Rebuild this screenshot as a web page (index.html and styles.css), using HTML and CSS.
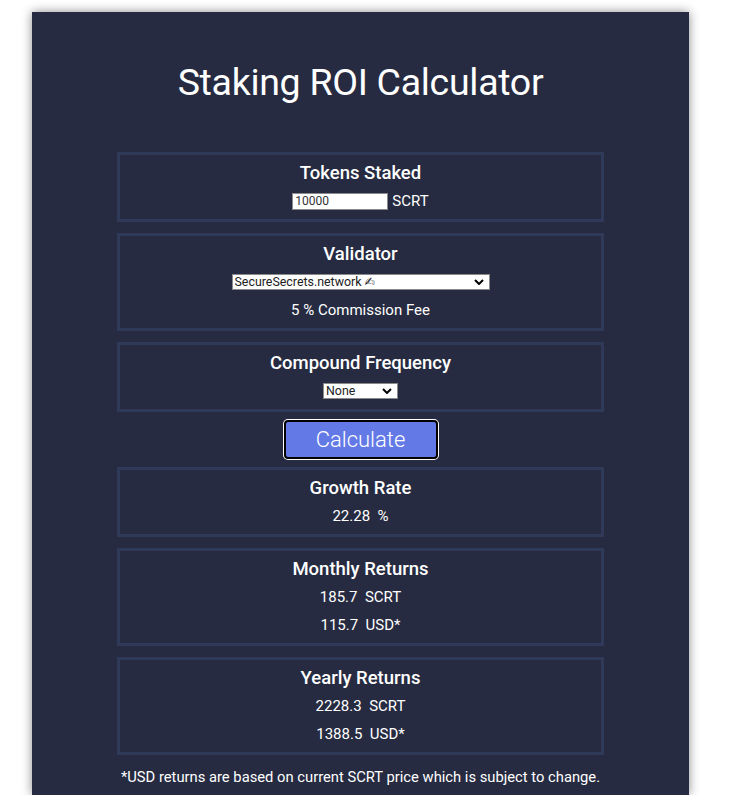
FILE: index.html
```html
<!DOCTYPE html>
<html>
<head>
<meta charset="utf-8">
<title>Staking ROI Calculator</title>
<link rel="stylesheet" href="styles.css">
</head>
<body>
<main class="panel">
  <h1 class="title">Staking ROI Calculator</h1>
  <section class="card">
    <h2 class="card-title">Tokens Staked</h2>
    <div class="row"><input class="num" type="text" value="10000"> SCRT</div>
  </section>
  <section class="card">
    <h2 class="card-title">Validator</h2>
    <div class="row">
      <span class="select-wrap wide">
        <select class="select"><option>SecureSecrets.network ✍</option></select>
        <svg class="chev" viewBox="0 0 10 6" width="10" height="6"><path d="M1 1l4 4 4-4" fill="none" stroke="#000" stroke-width="2"/></svg>
      </span>
    </div>
    <div class="row">5 % Commission Fee</div>
  </section>
  <section class="card">
    <h2 class="card-title">Compound Frequency</h2>
    <div class="row">
      <span class="select-wrap narrow">
        <select class="select"><option>None</option></select>
        <svg class="chev" viewBox="0 0 10 6" width="10" height="6"><path d="M1 1l4 4 4-4" fill="none" stroke="#000" stroke-width="2"/></svg>
      </span>
    </div>
  </section>
  <div class="btn-row"><button class="calc">Calculate</button></div>
  <section class="card">
    <h2 class="card-title">Growth Rate</h2>
    <div class="row">22.28&nbsp; %</div>
  </section>
  <section class="card">
    <h2 class="card-title">Monthly Returns</h2>
    <div class="row">185.7&nbsp; SCRT</div>
    <div class="row">115.7&nbsp; USD*</div>
  </section>
  <section class="card">
    <h2 class="card-title">Yearly Returns</h2>
    <div class="row">2228.3&nbsp; SCRT</div>
    <div class="row">1388.5&nbsp; USD*</div>
  </section>
  <p class="note">*USD returns are based on current SCRT price which is subject to change.</p>
</main>
</body>
</html>
```
FILE: styles.css
```css
html, body {
  margin: 0;
  padding: 0;
  background: #fff;
}
body {
  font-family: Roboto, "Liberation Sans", sans-serif;
  color: #fff;
}
.panel {
  box-sizing: border-box;
  margin: 12px 0 0 32px;
  width: 657px;
  height: 783px;
  background: #262b41;
  box-shadow: 0 0 10px rgba(0, 0, 0, 0.45);
  padding: 47px 85px 0;
  display: flex;
  flex-direction: column;
}
.title {
  margin: 0 0 47px;
  font-size: 37.5px;
  font-weight: 400;
  line-height: 46px;
  text-align: center;
  letter-spacing: -0.3px;
}
.card {
  border: 3px solid #2f3a59;
  padding: 4px 0;
  margin-bottom: 11px;
  text-align: center;
}
.card-title {
  margin: 0;
  font-size: 18.5px;
  font-weight: 500;
  line-height: 28px;
}
.row {
  font-size: 15px;
  line-height: 28px;
  min-height: 28px;
  display: flex;
  justify-content: center;
  align-items: center;
  gap: 4px;
}
.num {
  box-sizing: border-box;
  width: 96px;
  height: 17px;
  border: 1px solid #8a8a8a;
  padding: 0 2px;
  font-family: Roboto, "Liberation Sans", sans-serif;
  font-size: 12px;
  color: #333;
  outline: none;
  margin: 0;
}
.select-wrap {
  position: relative;
  display: inline-block;
  height: 16px;
}
.select-wrap.wide { width: 258px; }
.select-wrap.narrow { width: 75px; }
.select {
  appearance: none;
  -webkit-appearance: none;
  box-sizing: border-box;
  width: 100%;
  height: 16px;
  margin: 0;
  border: 1px solid #8a8a8a;
  border-radius: 0;
  background: #fff;
  padding: 0 2px;
  font-family: Roboto, "Liberation Sans", "DejaVu Sans", sans-serif;
  font-size: 12.4px;
  line-height: 14px;
  color: #222;
  display: block;
}
.chev {
  position: absolute;
  right: 6px;
  top: 5px;
  pointer-events: none;
}
.btn-row {
  display: flex;
  justify-content: center;
  margin: -3px 0 8px;
}
.calc {
  box-sizing: border-box;
  width: 154px;
  height: 39px;
  background: #6379e6;
  border: 2px solid #000;
  border-radius: 4px;
  box-shadow: 0 0 0 1px #fff;
  color: #fff;
  font-family: Roboto, "Liberation Sans", sans-serif;
  font-size: 22px;
  font-weight: 300;
  padding: 0;
}
.note {
  margin: 1px -40px 0;
  font-size: 14.75px;
  text-align: center;
  line-height: 20px;
  white-space: nowrap;
}
```
